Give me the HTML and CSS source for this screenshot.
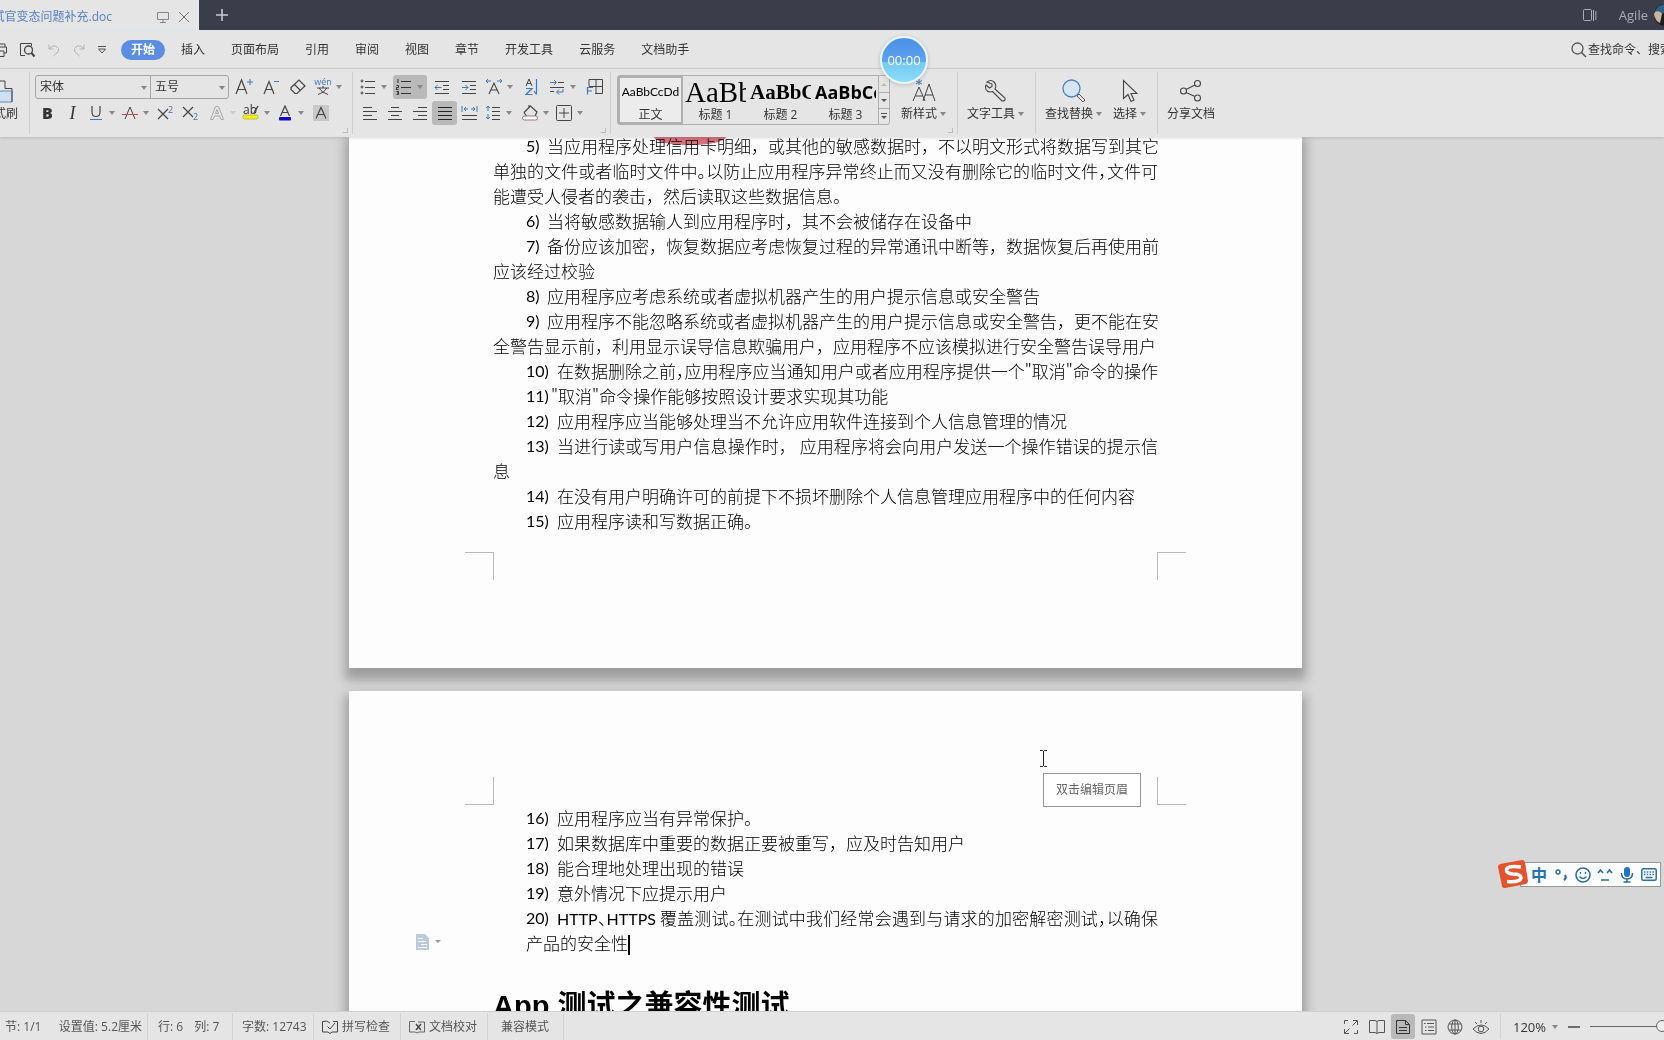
FILE: index.html
```html
<!DOCTYPE html>
<html lang="zh-CN">
<head>
<meta charset="utf-8">
<title>面试官变态问题补充.doc</title>
<link rel="stylesheet" href="styles.css">
</head>
<body>
<header class="titlebar">
  <div class="tab">
    <a class="tab-title" href="#doc">面试官变态问题补充.doc</a>
    <button class="plain" aria-label="演示"><svg width="12" height="12" viewBox="0 0 12 12"><path d="M.5 1.5h11v7H.5zM6 8.500v3M3 11.500h6" stroke="#85878c"/></svg></button>
    <button class="plain" aria-label="关闭"><svg width="12" height="12" viewBox="0 0 12 12"><path d="M1 1l10 10M11 1L1 11" stroke="#707278"/></svg></button>
  </div>
  <button class="plain new-tab" aria-label="新建标签"><svg width="12" height="12" viewBox="0 0 12 12"><path d="M6 0v12M0 6h12" stroke="#c8cad0" stroke-width="1.600"/></svg></button>
  <div class="account">
    <button class="plain" aria-label="标签列表"><svg width="14" height="13" viewBox="0 0 14 13"><rect x=".5" y=".5" width="8" height="11" rx="1" stroke="#a9adb6"/><path d="M10.500 1v11M12.800 2v9" stroke="#a9adb6"/></svg></button>
    <a class="user" href="#user">Agile</a>
    <svg class="avatar" width="22" height="22" viewBox="0 0 22 22"><circle cx="11" cy="11" r="11" fill="#191c20"/><path d="M1 7Q4 1 11 0l2 7-7 4-6 2z" fill="#2f6184"/><path d="M1 8q5-2 7 2l-2 9Q1 17 0 10z" fill="#c9b795"/></svg>
  </div>
</header>

<nav class="menubar">
  <div class="quick">
    <button class="plain" aria-label="打印"><svg width="16" height="16" viewBox="0 0 16 16"><path d="M4 5V2h9v3M4 11H1.500V5h13v6H12M4 9h8v5.500H4z" stroke="#444"/></svg></button>
    <button class="plain" aria-label="打印预览"><svg width="17" height="16" viewBox="0 0 17 16"><path d="M6 13.500H1.500V1.500h11V4" stroke="#444"/><circle cx="9.500" cy="8" r="4" stroke="#444" stroke-width="1.300"/><path d="M12.500 11l3 3.500" stroke="#444" stroke-width="2"/></svg></button>
    <button class="plain" aria-label="撤销"><svg width="14" height="14" viewBox="0 0 14 14"><path d="M2 1.500v4.500h4.500M2 6q3-4 7-3 4 2 2 6L6.500 13" stroke="#b5b5b5"/></svg></button>
    <button class="plain" aria-label="恢复"><svg width="14" height="14" viewBox="0 0 14 14"><path d="M12 1.500v4.500H7.500M12 6Q9 2 5 3 1 5 3 9l4.500 4" stroke="#b5b5b5"/></svg></button>
    <button class="plain" aria-label="更多"><svg width="10" height="10" viewBox="0 0 10 10"><path d="M1 1.500h8M1.500 4h7L5 8z" stroke="#555"/></svg></button>
  </div>
  <ul class="menu">
    <li><a class="current" href="#home">开始</a></li>
    <li><a href="#insert">插入</a></li>
    <li><a href="#layout">页面布局</a></li>
    <li><a href="#ref">引用</a></li>
    <li><a href="#review">审阅</a></li>
    <li><a href="#view">视图</a></li>
    <li><a href="#chapter">章节</a></li>
    <li><a href="#dev">开发工具</a></li>
    <li><a href="#cloud">云服务</a></li>
    <li><a href="#helper">文档助手</a></li>
  </ul>
  <label class="search">
    <svg width="16" height="16" viewBox="0 0 16 16"><circle cx="6.500" cy="6.500" r="5.500" stroke="#555" stroke-width="1.300"/><path d="M10.500 10.500L15 15" stroke="#555" stroke-width="1.600"/></svg>
    <input type="text" placeholder="查找命令、搜索模板" aria-label="查找命令、搜索模板">
  </label>
</nav>

<section class="ribbon" aria-label="开始">
  <div class="group painter">
    <button class="big"><svg width="26" height="26" viewBox="0 0 26 26"><path d="M1 13h24v11H1z" fill="#cfe0ef" stroke="#5a8fc4"/><path d="M1 13V10.500h7V3h10v7.500h7V24" stroke="#444"/></svg><span>格式刷</span></button>
  </div>

  <div class="group font-group launch">
    <div class="row spaced">
      <div class="combo">
        <label class="pick face"><select aria-label="字体"><option>宋体</option></select></label>
        <label class="pick size"><select aria-label="字号"><option>五号</option></select></label>
      </div>
      <button class="tool" aria-label="增大字号"><svg width="20" height="18" viewBox="0 0 20 18"><path d="M2 16L7.500 2 13 16M4 11.500h7" stroke="#444" stroke-width="1.200"/><path d="M16 1v6M13 4h6" stroke="#3c78bd"/></svg></button>
      <button class="tool" aria-label="减小字号"><svg width="20" height="18" viewBox="0 0 20 18"><path d="M3 16L8 3.500 13 16M5 11.500h6" stroke="#444" stroke-width="1.200"/><path d="M13 3.500h5" stroke="#3c78bd"/></svg></button>
      <button class="tool" aria-label="清除格式"><svg width="18" height="18" viewBox="0 0 18 18"><path d="M2 9.500L10 2l6 6-8 7.500H6L2 11.500zM5.500 6.500l6 6" stroke="#444" stroke-width="1.200"/></svg></button>
      <button class="tool drop" aria-label="拼音指南"><svg width="18" height="18" viewBox="0 0 18 18"><text x="9" y="7" class="g-pinyin">wén</text><path d="M3 10h12M9 8v2M5 10q3 5 9 6.500M13 10q-3 5-9 6.500" stroke="#444"/></svg></button>
    </div>
    <div class="row">
      <button class="tool glyph bold" aria-label="加粗">B</button>
      <button class="tool glyph ital" aria-label="倾斜">I</button>
      <button class="tool drop" aria-label="下划线"><svg width="14" height="16" viewBox="0 0 14 16"><path d="M3 1v6q0 4.500 4 4.500T11 7V1" stroke="#444" stroke-width="1.200"/><path d="M1 14.500h12" stroke="#3c78bd"/></svg></button>
      <button class="tool drop" aria-label="删除线"><svg width="18" height="16" viewBox="0 0 18 16"><path d="M4 14L9 2l5 12" stroke="#444"/><path d="M1 9.500h16" stroke="#c8434f"/></svg></button>
      <button class="tool" aria-label="上标"><svg width="17" height="16" viewBox="0 0 17 16"><path d="M1 4l10 10M11 4L1 14" stroke="#444" stroke-width="1.200"/><text x="11" y="8" class="g-num">2</text></svg></button>
      <button class="tool" aria-label="下标"><svg width="17" height="16" viewBox="0 0 17 16"><path d="M1 2l10 10M11 2L1 12" stroke="#444" stroke-width="1.200"/><text x="11" y="15" class="g-num">2</text></svg></button>
      <div class="row sub">
        <button class="tool drop off" aria-label="文字效果"><svg width="16" height="16" viewBox="0 0 16 16"><path d="M1.500 14.500L6.500 1.500h3l5 13H12L10.500 11h-5L4 14.500zM6.500 8.500h3L8 4.500z" stroke="#aaa"/></svg></button>
        <button class="tool drop" aria-label="突出显示"><svg width="17" height="17" viewBox="0 0 17 17"><text x="1" y="10" class="g-ab">ab</text><path d="M16 2l-4 7" stroke="#444" stroke-width="1.500"/><rect x="1" y="11" width="15" height="4" rx="1.500" fill="#f4f400" stroke="#8a8a35" stroke-width=".5"/></svg></button>
        <button class="tool drop" aria-label="字体颜色"><svg width="14" height="16" viewBox="0 0 14 16"><path d="M2.500 11L7 1l4.500 10M4 7.500h6" stroke="#444" stroke-width="1.200"/><rect x="1" y="12" width="12" height="3.500" rx="1" fill="#1208c8"/></svg></button>
        <button class="tool" aria-label="字符底纹"><svg width="16" height="16" viewBox="0 0 16 16"><path d="M0 0h16v16H0z" fill="#c8c8c8"/><path d="M3 13.500L8 2.500l5 11M4.800 9.500h6.400" stroke="#444" stroke-width="1.200"/></svg></button>
      </div>
    </div>
  </div>

  <div class="group para-group launch">
    <div class="row spaced">
      <button class="tool drop" aria-label="项目符号"><svg width="16" height="16" viewBox="0 0 16 16"><path d="M5 2.500h10M5 8.500h10M5 14.500h10" stroke="#444"/><g stroke="#444"><circle cx="2" cy="2" r="1"/><circle cx="2" cy="8" r="1"/><circle cx="2" cy="14" r="1"/></g></svg></button>
      <button class="tool drop on" aria-label="编号"><svg width="16" height="16" viewBox="0 0 16 16"><path d="M5 2.500h10M5 8.500h10M5 14.500h10" stroke="#333"/><path d="M2 0v4M.5 6.500h2v2h-2v2h2M.5 12.500h2v3h-2M1 14h1" stroke="#333"/></svg></button>
      <button class="tool" aria-label="减少缩进"><svg width="16" height="16" viewBox="0 0 16 16"><path d="M1 2.500h14M9 6.500h6M9 10.500h6M1 14.500h14" stroke="#444"/><path d="M7.500 8.500H1M3.500 6L1 8.500 3.500 11" stroke="#3c78bd"/></svg></button>
      <button class="tool" aria-label="增加缩进"><svg width="16" height="16" viewBox="0 0 16 16"><path d="M1 2.500h14M9 6.500h6M9 10.500h6M1 14.500h14" stroke="#444"/><path d="M1 8.500h6M4.500 6L7 8.500 4.500 11" stroke="#3c78bd"/></svg></button>
      <button class="tool drop" aria-label="中文版式"><svg width="18" height="18" viewBox="0 0 18 18"><path d="M4 16L9 5l5 11M5.800 12h6.400" stroke="#444" stroke-width="1.100"/><path d="M6 3H1M3 1L1 3l2 2M12 3h5M15 1l2 2-2 2" stroke="#3c78bd"/></svg></button>
      <button class="tool" aria-label="排序"><svg width="16" height="18" viewBox="0 0 16 18"><path d="M2 8l3-7 3 7M3 5.500h4" stroke="#444"/><path d="M2 10.500h6L2 16.500h6.500M12.500 1v15M10 13l2.500 3.500" stroke="#3c78bd" stroke-width="1.200"/></svg></button>
      <button class="tool drop" aria-label="显示段落标记"><svg width="16" height="16" viewBox="0 0 16 16"><path d="M9 3.500h6M1 8.500h14M1 12.500h4" stroke="#444"/><path d="M1 3.500h6M5 1l2.500 2.500L5 6M14 10v3H8M10 10.500L7.500 13l2.500 2.500" stroke="#3c78bd"/></svg></button>
      <button class="tool" aria-label="制表位"><svg width="18" height="18" viewBox="0 0 18 18"><path d="M3 8V1.500h13.500v14H9M10 1.500v14M3 8.500h13.500" stroke="#444"/><path d="M1.500 16.500v-7H7M1.500 13H6" stroke="#3c78bd" stroke-width="1.200"/></svg></button>
    </div>
    <div class="row">
      <button class="tool" aria-label="左对齐"><svg width="16" height="16" viewBox="0 0 16 16"><path d="M1 2.500h9M1 6.500h14M1 10.500h9M1 14.500h14" stroke="#444"/></svg></button>
      <button class="tool" aria-label="居中"><svg width="16" height="16" viewBox="0 0 16 16"><path d="M4 2.500h8M1 6.500h14M4 10.500h8M1 14.500h14" stroke="#444"/></svg></button>
      <button class="tool" aria-label="右对齐"><svg width="16" height="16" viewBox="0 0 16 16"><path d="M6 2.500h9M1 6.500h14M6 10.500h9M1 14.500h14" stroke="#444"/></svg></button>
      <button class="tool on" aria-label="两端对齐"><svg width="16" height="16" viewBox="0 0 16 16"><path d="M1 2.500h14M1 6.500h14M1 10.500h14M1 14.500h14" stroke="#222"/></svg></button>
      <button class="tool" aria-label="分散对齐"><svg width="17" height="16" viewBox="0 0 17 16"><path d="M1 10.500h15M1 14.500h15" stroke="#444"/><path d="M1 1v6M16 1v6M3 4h4M5 2L3 4l2 2M10 4h4M12 2l2 2-2 2" stroke="#3c78bd"/></svg></button>
      <button class="tool drop" aria-label="行距"><svg width="16" height="16" viewBox="0 0 16 16"><path d="M7 2.500h8M7 6.500h8M7 10.500h8M7 14.500h8" stroke="#444"/><path d="M3 1v5M1 3l2-2 2 2M3 9v5M1 12l2 2 2-2" stroke="#3c78bd"/></svg></button>
      <div class="row sub">
        <button class="tool drop" aria-label="底纹颜色"><svg width="18" height="17" viewBox="0 0 18 17"><path d="M3 8.500l6.500-6.500L16 8l-2 4M3 8.500L5.500 12M8 3.500V1" stroke="#444" stroke-width="1.200"/><rect x="1.500" y="12" width="15" height="4" rx="2" fill="#fff" stroke="#9a7a80"/></svg></button>
        <button class="tool drop" aria-label="边框"><svg width="16" height="16" viewBox="0 0 16 16"><rect x=".5" y=".5" width="15" height="15" rx="1" stroke="#444"/><path d="M8 3v10M3 8h10" stroke="#444"/></svg></button>
      </div>
    </div>
  </div>

  <div class="group style-group launch">
    <div class="gallery">
      <button class="style chosen"><span class="sample s-body">AaBbCcDd</span><span>正文</span></button>
      <button class="style"><span class="sample s-h1">AaBb</span><span>标题 1</span></button>
      <button class="style"><span class="sample s-h2">AaBbC</span><span>标题 2</span></button>
      <button class="style"><span class="sample s-h3">AaBbCc</span><span>标题 3</span></button>
      <div class="scroller">
        <button class="plain" aria-label="上一行"><svg width="6" height="4" viewBox="0 0 6 4"><path d="M0 4l3-3 3 3z" fill="#bbb"/></svg></button>
        <button class="plain" aria-label="下一行"><svg width="6" height="4" viewBox="0 0 6 4"><path d="M0 0l3 3 3-3z" fill="#555"/></svg></button>
        <button class="plain" aria-label="全部样式"><svg width="6" height="7" viewBox="0 0 6 7"><path d="M0 .5h6" stroke="#555"/><path d="M0 3l3 3 3-3z" fill="#555"/></svg></button>
      </div>
    </div>
    <button class="big"><svg width="26" height="26" viewBox="0 0 26 26"><path d="M2 23L8 9l6 14M4.500 18h7M12 23l6-17 6 17M14 17h8" stroke="#444"/><path d="M8 1v6M5 3l6 3M11 2.500L5 6" stroke="#3c78bd"/></svg><span class="more">新样式</span></button>
  </div>

  <div class="group"><button class="big"><svg width="24" height="24" viewBox="0 0 24 24"><path d="M3 3q4-3 7 0 3 3 1 7l10 9q1 3-3 3L8.500 12.500Q4 14 2 10.500 1 8 2 6l3.500 3L8 7.500V5z" stroke="#444" stroke-width="1.100"/></svg><span class="more">文字工具</span></button></div>

  <div class="group">
    <button class="big"><svg width="24" height="24" viewBox="0 0 24 24"><circle cx="9.500" cy="9.500" r="8.500" fill="#d3e5f7" stroke="#4d80b5" stroke-width="1.300"/><path d="M15 17l2-2 6 6-2 2z" stroke="#555"/></svg><span class="more">查找替换</span></button>
    <button class="big"><svg width="16" height="24" viewBox="0 0 16 24"><path d="M1.500 1.500v18l4.500-4 3 7 3-1.500-3-6.500h6z" stroke="#444" stroke-width="1.100"/></svg><span class="more">选择</span></button>
  </div>

  <div class="group"><button class="big"><svg width="24" height="24" viewBox="0 0 24 24"><g stroke="#444" stroke-width="1.100"><circle cx="4.500" cy="12" r="3"/><circle cx="18.500" cy="4.500" r="3"/><circle cx="18.500" cy="19" r="3"/><path d="M7 10.500l9-4.500M7 13.500l9 4"/></g></svg><span>分享文档</span></button></div>
</section>

<main class="workspace" id="doc">
  <div class="stain"></div>
  <article class="page first">
    <ol class="items">
      <li><span class="no one">5)</span><p><span class="fill">当应用程序处理信用卡明细，或其他的敏感数据时，不以明文形式将数据写到其它</span></p></li>
      <li class="cont"><p><span class="fill tight">单独的文件或者临时文件中。以防止应用程序异常终止而又没有删除它的临时文件，文件可</span></p></li>
      <li class="cont"><p>能遭受人侵者的袭击，然后读取这些数据信息。</p></li>
      <li><span class="no one">6)</span><p>当将敏感数据输人到应用程序时，其不会被储存在设备中</p></li>
      <li><span class="no one">7)</span><p><span class="fill">备份应该加密，恢复数据应考虑恢复过程的异常通讯中断等，数据恢复后再使用前</span></p></li>
      <li class="cont"><p>应该经过校验</p></li>
      <li><span class="no one">8)</span><p>应用程序应考虑系统或者虚拟机器产生的用户提示信息或安全警告</p></li>
      <li><span class="no one">9)</span><p><span class="fill">应用程序不能忽略系统或者虚拟机器产生的用户提示信息或安全警告，更不能在安</span></p></li>
      <li class="cont"><p>全警告显示前，利用显示误导信息欺骗用户，应用程序不应该模拟进行安全警告误导用户</p></li>
      <li><span class="no">10)</span><p><span class="fill tight">在数据删除之前，应用程序应当通知用户或者应用程序提供一个"取消"命令的操作</span></p></li>
      <li><span class="no flush">11)</span><p>"取消"命令操作能够按照设计要求实现其功能</p></li>
      <li><span class="no">12)</span><p>应用程序应当能够处理当不允许应用软件连接到个人信息管理的情况</p></li>
      <li><span class="no">13)</span><p><span class="fill">当进行读或写用户信息操作时， 应用程序将会向用户发送一个操作错误的提示信</span></p></li>
      <li class="cont"><p>息</p></li>
      <li><span class="no">14)</span><p>在没有用户明确许可的前提下不损坏删除个人信息管理应用程序中的任何内容</p></li>
      <li><span class="no">15)</span><p>应用程序读和写数据正确。</p></li>
    </ol>
    <div class="corners bottom"><i></i><i></i></div>
  </article>

  <article class="page second">
    <div class="corners top"><i></i><i></i></div>
    <div class="header-tip">双击编辑页眉</div>
    <svg class="ibeam" width="9" height="17" viewBox="0 0 9 17"><path d="M1 .5h2.500l1 1 1-1H8M4.500 1.500v14M1 16.500h2.500l1-1 1 1H8" stroke="#222"/></svg>
    <ol class="items">
      <li><span class="no">16)</span><p>应用程序应当有异常保护。</p></li>
      <li><span class="no">17)</span><p>如果数据库中重要的数据正要被重写，应及时告知用户</p></li>
      <li><span class="no">18)</span><p>能合理地处理出现的错误</p></li>
      <li><span class="no">19)</span><p>意外情况下应提示用户</p></li>
      <li><span class="no">20)</span><p><span class="fill tight"><span class="latin">HTTP</span>、<span class="latin">HTTPS</span> 覆盖测试。在测试中我们经常会遇到与请求的加密解密测试，以确保</span></p></li>
      <li><p>产品的安全性<span class="cursor"></span></p>
        <button class="plain para-mark" aria-label="段落布局"><svg width="26" height="16" viewBox="0 0 26 16"><path d="M0 0h9l4 4v12H0z" fill="#b9cbdd"/><path d="M2 4.500h5M2 7.500h8M5 10.500h6M2 13.500h9" stroke="#fff"/><path d="M19 6h6l-3 3z" fill="#999"/></svg></button></li>
    </ol>
    <h1>App 测试之兼容性测试</h1>
  </article>
</main>

<footer class="status">
  <div class="cell wide"><span>节: 1/1</span><span>设置值: 5.2厘米</span></div>
  <div class="cell pair"><span>行: 6</span><span>列: 7</span></div>
  <div class="cell count">字数: 12743</div>
  <button class="cell check"><svg width="16" height="14" viewBox="0 0 16 14"><path d="M8 3Q5 0 .5 1.500v10.500H6l2 1.500 2-1.500h5.500V1.500H11M5.500 6.500L8 9l5-6" stroke="#444"/></svg>拼写检查</button>
  <button class="cell check"><svg width="16" height="14" viewBox="0 0 16 14"><path d="M6 1.500H.5v10.500H6l2 1 2-1h5.500v-10H9" stroke="#666"/><path d="M7 4l5 6M12 4L7 10" stroke="#444" stroke-width="1.400"/></svg>文档校对</button>
  <div class="cell mode">兼容模式</div>
  <div class="views">
    <button class="view" aria-label="全屏"><svg width="16" height="16" viewBox="0 0 16 16"><path d="M1.500 5V1.500H5M10 1.500h4.500V6M14.500 11v3.500H11M6 14.500H1.500V10M14 2L9.500 6.500M2 14l4.500-4.500" stroke="#555"/></svg></button>
    <button class="view" aria-label="阅读版式"><svg width="16" height="16" viewBox="0 0 16 16"><path d="M.5 1.500H6l2 1 2-1h5.500v12H10l-2 1-2-1H.5zM8 2.500v12" stroke="#555"/></svg></button>
    <button class="view on" aria-label="页面视图"><svg width="16" height="16" viewBox="0 0 16 16"><path d="M1.500 1.500h9l4 4v9h-13zM10.500 1.500v4h4M4 8.500h8M4 11.500h8" stroke="#333"/></svg></button>
    <button class="view" aria-label="大纲"><svg width="16" height="16" viewBox="0 0 16 16"><path d="M1 1h14v14H1zM6 4.500h7M7 8h6M7 11.500h6M3 4.500h1.500M4 8h1.500M4 11.500h1.500" stroke="#555"/></svg></button>
    <button class="view" aria-label="Web版式"><svg width="16" height="16" viewBox="0 0 16 16"><g stroke="#555"><circle cx="8" cy="8" r="7"/><ellipse cx="8" cy="8" rx="3.300" ry="7"/><path d="M2 5h12M2 11h12M8 1v14"/></g></svg></button>
    <button class="view" aria-label="护眼模式"><svg width="18" height="16" viewBox="0 0 18 16"><g stroke="#555"><path d="M1 10q8-8 16 0-8 9-16 0zM9 1v3M3 3l2 2M15 3l-2 2"/><circle cx="9" cy="10" r="2.800"/></g></svg></button>
  </div>
  <div class="zoom">
    <button class="plain level">120%</button>
    <button class="plain" aria-label="缩小"><svg width="12" height="12" viewBox="0 0 12 12"><path d="M0 6h12" stroke="#444" stroke-width="1.500"/></svg></button>
    <input type="range" aria-label="显示比例" min="10" max="230" value="120">
  </div>
</footer>

<div class="timer">00:00</div>

<aside class="ime" aria-label="输入法">
  <svg class="sogou" width="32" height="30" viewBox="0 0 32 30"><path d="M3 5L25 1q2 0 3 2l3 19q0 2-2 3L8 29q-3 0-3-2L1 8q0-2 2-3z" fill="#e4532b"/><path d="M24 8Q9 6 9.500 11.500 10 14.500 16 15q8 0 8 4-1 4.500-14 3.500" stroke="#fff" stroke-width="3.600"/></svg>
  <button class="plain zh">中</button>
  <button class="plain" aria-label="标点"><svg width="16" height="16" viewBox="0 0 16 16"><circle cx="5" cy="5" r="2" stroke="#2f6bb0" stroke-width="1.400"/><path d="M12 8q2 3-1 5" stroke="#2f6bb0" stroke-width="2.200"/></svg></button>
  <button class="plain" aria-label="表情"><svg width="16" height="16" viewBox="0 0 16 16"><circle cx="8" cy="8" r="7" stroke="#2a6f9f" stroke-width="1.600"/><path d="M5.500 5v2M10.500 5v2M4.500 9.500q3.500 4 7 0" stroke="#2a6f9f" stroke-width="1.300"/></svg></button>
  <button class="plain" aria-label="颜文字"><svg width="16" height="16" viewBox="0 0 16 16"><path d="M1 6l2.500-3L6 6M10 6l2.500-3L15 6M4 13h8" stroke="#2a6f9f" stroke-width="1.700"/></svg></button>
  <button class="plain" aria-label="语音"><svg width="14" height="16" viewBox="0 0 14 16"><rect x="4" y="0" width="6" height="10" rx="3" fill="#2474c4"/><path d="M1.500 6q0 6 5.500 6t5.500-6M7 12v3M3.500 15h7" stroke="#2a6f9f" stroke-width="1.500"/></svg></button>
  <button class="plain" aria-label="软键盘"><svg width="16" height="13" viewBox="0 0 16 13"><rect x=".8" y=".8" width="14.400" height="11.400" rx="1.500" stroke="#2a6f9f" stroke-width="1.500"/><path d="M3 4h10M3 6.500h10" stroke="#2a6f9f" stroke-width="1.500" stroke-dasharray="1.500 1.300"/><path d="M4.500 9.500h7" stroke="#2a6f9f" stroke-width="1.500"/></svg></button>
</aside>
</body>
</html>
```
FILE: styles.css
```css
* { box-sizing: border-box; }

body {
  margin: 0;
  height: 100vh;
  display: flex;
  flex-direction: column;
  overflow: hidden;
  position: relative;
  font: 12px/16px "Open Sans", "Noto Sans CJK SC", sans-serif;
  color: #333;
  background: #e5e5e5;
}

svg { fill: none; display: block; flex: none; }
a { color: inherit; text-decoration: none; }
ul, ol { margin: 0; padding: 0; list-style: none; }

button {
  font: inherit;
  color: inherit;
  border: 0;
  padding: 0;
  background: none;
  white-space: nowrap;
}

.plain { display: flex; align-items: center; justify-content: center; }

/* Title bar */
.titlebar {
  display: flex;
  align-items: center;
  height: 30px;
  flex: none;
  background: #3b3e4a;
}

.tab {
  display: flex;
  align-items: center;
  width: 199px;
  height: 30px;
  gap: 9px;
  padding-top: 3px;
  background: #e5e5e5;
}

.tab-title {
  width: 112px;
  margin-right: 36px;
  display: flex;
  justify-content: flex-end;
  white-space: nowrap;
  overflow: hidden;
  color: #5580c4;
}

.new-tab { margin-left: 17px; }

.account {
  display: flex;
  align-items: center;
  margin-left: auto;
  margin-right: -12px;
  color: #a9adb6;
  font-size: 13px;
}

.user { margin: 0 6px 0 22px; }

/* Menu bar */
.menubar {
  display: flex;
  align-items: center;
  height: 39px;
  flex: none;
  border-top: 1px solid #dfe3ee;
  border-bottom: 1px solid #d0d0d0;
  overflow: hidden;
}

.quick { display: flex; align-items: center; gap: 11px; margin-left: -8px; width: 129px; flex: none; }

.menu { display: flex; align-items: center; gap: 26px; white-space: nowrap; }

.current {
  display: block;
  margin: 0 -10px;
  padding: 2px 10px;
  border-radius: 10px;
  background: #5b8ee3;
  color: #fff;
  font-weight: bold;
}

.menu li:first-child { padding-left: 10px; }

.search { display: flex; align-items: center; margin-left: auto; margin-right: -24px; width: 117px; gap: 1px; }

.search input {
  width: 100px;
  flex: none;
  border: 0;
  padding: 0;
  font: inherit;
  background: none;
}

.search input::placeholder { color: #333; }

/* Ribbon */
.ribbon {
  display: flex;
  height: 68px;
  flex: none;
  position: relative;
  z-index: 2;
  box-shadow: 0 1px 3px #0002;
  background: #e5e5e5;
}

.group {
  display: flex;
  position: relative;
  gap: 11px;
  padding: 9px 11px 0 10px;
  align-items: flex-start;
}

.group::before {
  content: "";
  position: absolute;
  left: 0;
  top: 3px;
  width: 1px;
  height: 62px;
  background: #cfcfcf;
}

.launch::after {
  content: "";
  position: absolute;
  right: 4px;
  bottom: 4px;
  width: 4px;
  height: 4px;
  border: solid #bbb;
  border-width: 0 1px 1px 0;
}

.painter { width: 29px; padding: 9px 11px 0 0; justify-content: flex-end; }
.painter::before { display: none; }

.font-group, .para-group {
  flex-direction: column;
  gap: 1px;
  padding: 5px 0 0 6px;
  width: 323px;
}

.para-group { width: 258px; padding-left: 5px; }

.row { display: flex; align-items: center; height: 25px; }
.spaced { gap: 2px; }
.sub { margin-left: 3px; }

.combo {
  display: flex;
  width: 194px;
  height: 24px;
  border: 1px solid #a5a5a5;
  border-radius: 3px;
}

.pick { position: relative; display: flex; }
.face { width: 115px; border-right: 1px solid #a5a5a5; }
.size { width: 77px; }

.pick::after, .drop::after, .more::after, .level::after {
  content: "";
  border: solid transparent;
  border-width: 4px 3px 0;
  border-top-color: #888;
}

.pick::after { position: absolute; right: 3px; top: 10px; }

.pick select {
  appearance: none;
  width: 100%;
  border: 0;
  padding: 0 4px;
  background: none;
  font: inherit;
  color: inherit;
}

.tool {
  display: flex;
  align-items: center;
  justify-content: center;
  width: 25px;
  height: 24px;
  border-radius: 3px;
}

.drop { width: 34px; gap: 3px; justify-content: flex-end; padding-right: 4px; }
.drop svg { margin: 0 auto; }
.off::after { border-top-color: #ccc; }
.on { background: #b9b9b9; }

.glyph { font-size: 16px; }
.bold { font-weight: 800; }
.ital { font-family: "Liberation Serif", serif; font-style: italic; font-size: 18px; }
.g-pinyin { font-size: 9px; fill: #3c78bd; text-anchor: middle; }
.g-num { font-size: 9px; fill: #3c78bd; }
.g-ab { font-size: 12px; fill: #333; }

.big {
  display: flex;
  flex-direction: column;
  align-items: center;
  gap: 2px;
}

.big svg { height: 26px; }
.more { display: flex; align-items: center; gap: 3px; }

.style-group { padding-left: 7px; }

.gallery {
  display: flex;
  width: 273px;
  height: 50px;
  margin-top: -3px;
  border: 1px solid #b0b0b0;
  border-radius: 3px;
}

.style {
  display: flex;
  flex-direction: column;
  align-items: center;
  justify-content: flex-end;
  width: 65px;
  padding-bottom: 1px;
  overflow: hidden;
}

.chosen { box-shadow: inset 0 0 0 2px #b0b0b0; background: #ececec; }

.sample {
  display: flex;
  align-items: center;
  height: 30px;
  width: 61px;
  overflow: hidden;
  color: #000;
}

.s-body { font: 12px/30px Lato, sans-serif; justify-content: center; }
.s-h1 { font: 29px/30px "Liberation Serif", serif; }
.s-h2 { font: bold 21px/30px "Liberation Serif", serif; }
.s-h3 { font: bold 18px/30px "Open Sans", sans-serif; }

.scroller {
  display: grid;
  grid-template-rows: repeat(3, 1fr);
  width: 11px;
  border-left: 1px solid #b0b0b0;
}

.scroller button + button { border-top: 1px solid #b0b0b0; }

/* Document */
.workspace {
  flex: 1;
  min-height: 0;
  position: relative;
  overflow: hidden;
  padding-right: 13px;
  background: #d7d7d7;
}

.page {
  position: relative;
  width: 953px;
  margin: 0 auto 23px;
  padding: 0 144px;
  background: #fdfdfd;
  box-shadow: 0 8px 10px 4px #0004;
  color: #000;
}

.first { margin-top: -4px; padding-bottom: 88px; }
.second { padding-top: 86px; padding-bottom: 60px; }

.items { font: 300 17px/25px "Noto Sans CJK SC", sans-serif; }
.items li { display: flex; position: relative; height: 25px; padding-left: 33px; }
.items .cont { padding-left: 0; }
.items p { margin: 0; flex: 1; min-width: 0; white-space: nowrap; }
.no, .latin { font-family: Lato, sans-serif; font-size: 16px; font-weight: 400; }
.no { width: 31px; }
.one { width: 21px; }
.flush { width: 25px; }
.fill { display: block; text-align: justify; text-align-last: justify; }
.tight { font-feature-settings: "halt"; }

.corners { display: flex; justify-content: space-between; margin: 0 -28px; }
.corners i { width: 29px; height: 28px; border: 0 solid #b9b9b9; }
.bottom { margin-top: 19px; }
.bottom i { border-top-width: 1px; }
.top i { border-bottom-width: 1px; }
.corners i:first-child { border-right-width: 1px; }
.corners i:last-child { border-left-width: 1px; }

.header-tip {
  position: absolute;
  left: 694px;
  top: 82px;
  padding: 8px 12px;
  border: 1px solid #999;
  background: #fff;
  color: #666;
}

.ibeam { position: absolute; left: 690px; top: 59px; }

.cursor {
  display: inline-block;
  width: 2px;
  height: 20px;
  vertical-align: middle;
  background: #000;
}

.para-mark { position: absolute; left: -77px; top: 4px; }

.second h1 {
  margin: 29px 0 0;
  font: bold 29px/44px "Liberation Sans", "Noto Sans CJK SC", sans-serif;
}

.stain {
  position: absolute;
  z-index: 1;
  left: 654px;
  top: 0;
  width: 72px;
  height: 8px;
  border-radius: 0 0 36px 36px / 0 0 8px 8px;
  background: #c8505c;
  mix-blend-mode: multiply;
  opacity: .8;
}

/* Status bar */
.status {
  display: flex;
  align-items: center;
  height: 29px;
  flex: none;
  padding-top: 1px;
  border-top: 1px solid #d0d0d0;
  color: #555;
}

.cell {
  display: flex;
  align-items: center;
  height: 26px;
  padding: 0 9px;
  border-right: 1px solid #d3d3d3;
  white-space: nowrap;
}

.wide { width: 148px; padding: 0 5px; justify-content: space-between; }
.pair { width: 85px; gap: 11px; padding-left: 10px; }
.count { width: 81px; }
.check { width: 87px; gap: 4px; padding: 0 8px; }
.mode { width: 76px; padding-left: 13px; }

.views { display: flex; gap: 2px; margin-left: auto; padding-right: 7px; border-right: 1px solid #d3d3d3; }

.view {
  display: flex;
  align-items: center;
  justify-content: center;
  width: 24px;
  height: 25px;
  border-radius: 3px;
}

.zoom { display: flex; align-items: center; gap: 10px; margin-right: -70px; padding-left: 12px; }
.level { font-size: 13px; gap: 6px; color: #333; }

.zoom input { appearance: none; width: 144px; height: 14px; margin: 0; background: none; }
.zoom input::-webkit-slider-runnable-track { height: 1px; background: #666; }

.zoom input::-webkit-slider-thumb {
  appearance: none;
  width: 12px;
  height: 12px;
  margin-top: -6px;
  border: 1px solid #666;
  border-radius: 50%;
  background: #eee;
}

/* Floating widgets */
.timer {
  position: absolute;
  z-index: 3;
  left: 880px;
  top: 36px;
  width: 48px;
  height: 48px;
  border: 2px solid #e8f7fd;
  border-radius: 50%;
  background: linear-gradient(#4a8fe8, #5ea4ee 55%, #74c8f4 55%, #8bdcf8);
  box-shadow: 0 1px 4px #0003;
  color: #fff;
  font-size: 13px;
  line-height: 45px;
  text-align: center;
}

.ime {
  position: absolute;
  z-index: 3;
  right: 3px;
  bottom: 153px;
  width: 141px;
  height: 25px;
  display: grid;
  grid-template-columns: repeat(6, 22px);
  padding-left: 7px;
  border: 1px solid #999;
  background: #fbfdfe;
}

.sogou { position: absolute; left: -24px; top: -4px; }
.zh { color: #2474b4; font-size: 16px; font-weight: bold; }
```
